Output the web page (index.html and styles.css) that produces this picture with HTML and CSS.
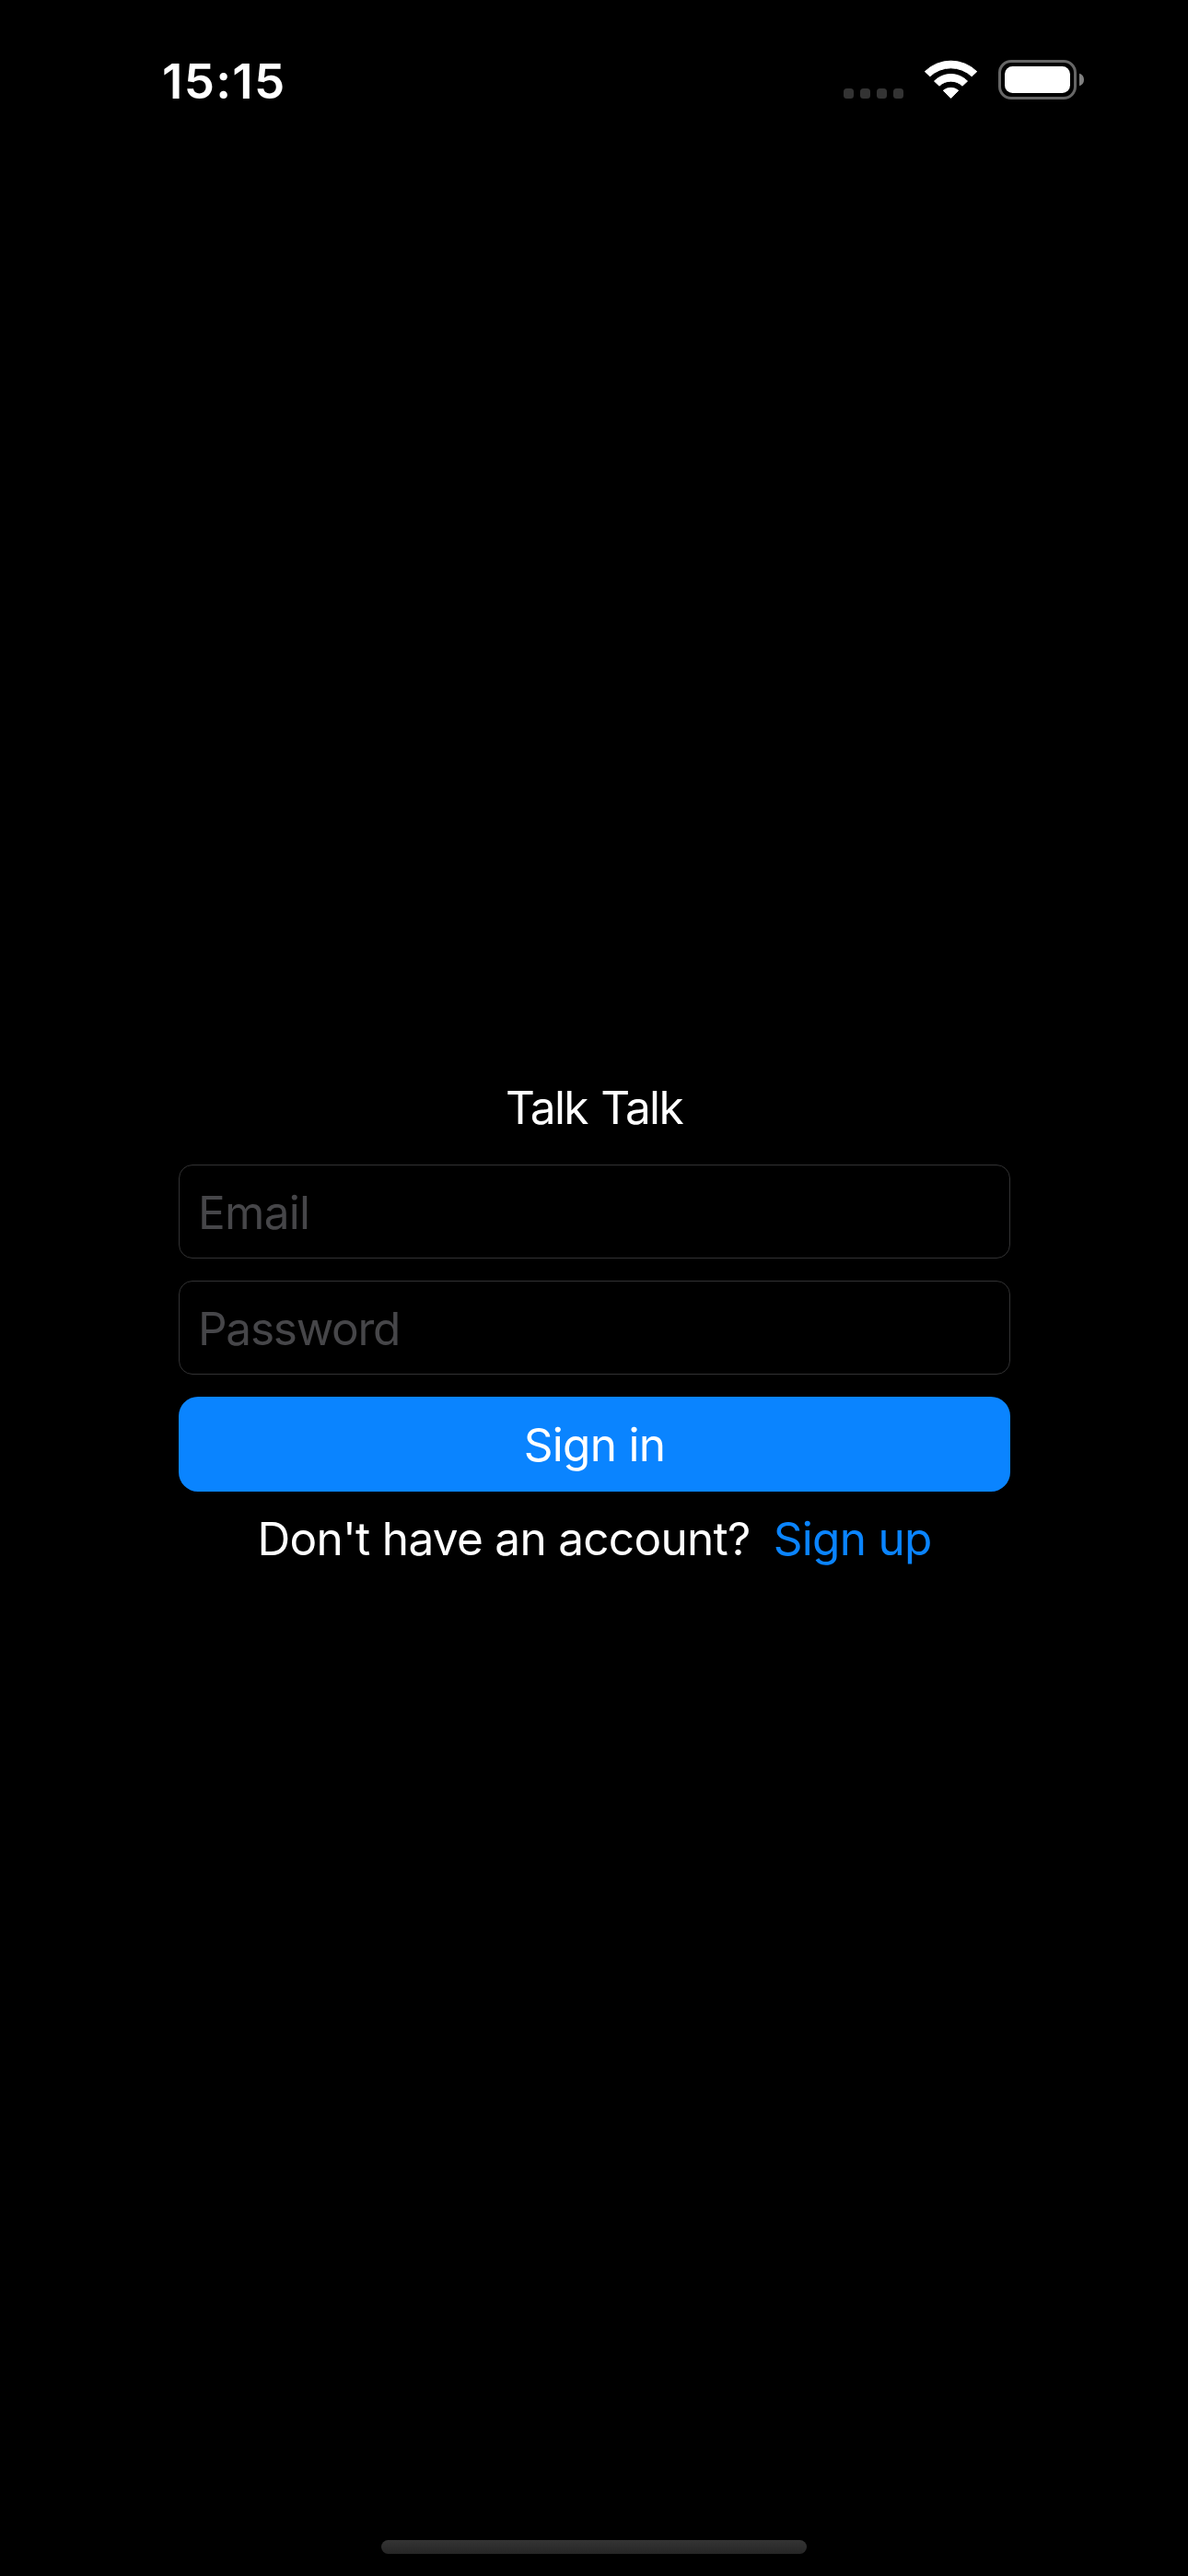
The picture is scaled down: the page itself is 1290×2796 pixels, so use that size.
FILE: index.html
```html
<!DOCTYPE html>
<html lang="en">
<head>
<meta charset="utf-8">
<title>Talk Talk</title>
<link rel="stylesheet" href="styles.css">
</head>
<body>
<div class="screen">
  <header class="status-bar">
    <span class="time">15:15</span>
    <svg class="status-icons" width="262" height="44" viewBox="916 65 262 44" aria-hidden="true">
      <g fill="#333">
        <rect x="916" y="96" width="11" height="11" rx="3.5"/>
        <rect x="934" y="96" width="11" height="11" rx="3.5"/>
        <rect x="952" y="96" width="11" height="11" rx="3.5"/>
        <rect x="970" y="96" width="11" height="11" rx="3.5"/>
      </g>
      <g fill="#fff" stroke="#fff" stroke-width="1" stroke-linejoin="round">
        <path d="M1004.3 77.7A40.2 40.2 0 0 1 1060.7 77.7L1055.2 82.8A33.2 33.2 0 0 0 1009.8 82.8Z"/>
        <path d="M1014.5 88.1A25 25 0 0 1 1050.5 88.1L1045 93.2A18 18 0 0 0 1020 93.2Z"/>
        <path d="M1024.3 98.2A13 13 0 0 1 1040.7 98.2L1032.5 106.4Z"/>
      </g>
      <rect x="1085.5" y="66.5" width="82" height="40" rx="12.5" fill="none" stroke="#666" stroke-width="3"/>
      <rect x="1091" y="72" width="71" height="29" rx="8.5" fill="#fff"/>
      <path d="M1172 79.7Q1177 81.5 1177 86.5T1172 93.3Z" fill="#808080"/>
    </svg>
  </header>
  <main class="sign-in">
    <h1 class="title">Talk Talk</h1>
    <input class="field email" type="email" placeholder="Email" aria-label="Email">
    <input class="field password" type="password" placeholder="Password" aria-label="Password">
    <button class="submit" type="button">Sign in</button>
    <p class="footer"><span>Don't have an account?</span><a class="link">Sign up</a></p>
  </main>
  <div class="home-indicator"></div>
</div>
</body>
</html>
```
FILE: styles.css
```css
* {
  box-sizing: border-box;
}

body {
  margin: 0;
  background: #000;
  color: #fff;
  font: 400 49.5px/60px Inter, sans-serif;
  letter-spacing: -0.7px;
}

.screen {
  display: flex;
  flex-direction: column;
  align-items: center;
  width: 1290px;
  height: 2796px;
  padding-bottom: 24px;
}

.status-bar {
  display: flex;
  justify-content: space-between;
  align-items: flex-start;
  width: 100%;
  padding: 58px 112px 0 176px;
}

.time {
  font-size: 52.8px;
  font-weight: 600;
  letter-spacing: 1.3px;
}

.status-icons {
  margin-top: 7px;
}

.sign-in {
  display: flex;
  flex-direction: column;
  gap: 24px;
  width: 903px;
  margin: 1054px 0 auto 1px;
}

.title {
  margin: 0 0 8px;
  padding-right: 1px;
  font-size: inherit;
  font-weight: inherit;
  letter-spacing: -1.6px;
  word-spacing: 2px;
  text-align: center;
}

.field {
  width: 100%;
  height: 102px;
  margin: 0;
  padding: 1px 20px 0;
  border: 1px solid #323233;
  border-radius: 15px;
  background: #000;
  color: #fff;
  font: inherit;
  letter-spacing: inherit;
}

.field::placeholder {
  color: #464649;
  opacity: 1;
}

.password {
  letter-spacing: -1.25px;
}

.submit {
  height: 103px;
  padding: 1px 0 0;
  border: 0;
  border-radius: 21px;
  background: #0a84ff;
  color: #fff;
  font: inherit;
  letter-spacing: inherit;
}

.footer {
  display: flex;
  justify-content: center;
  gap: 25px;
  margin: -3px 0 0;
}

.link {
  color: #0a84ff;
}

.home-indicator {
  width: 462px;
  height: 15px;
  border-radius: 8px;
  background: linear-gradient(#343434, #262626);
}
```
